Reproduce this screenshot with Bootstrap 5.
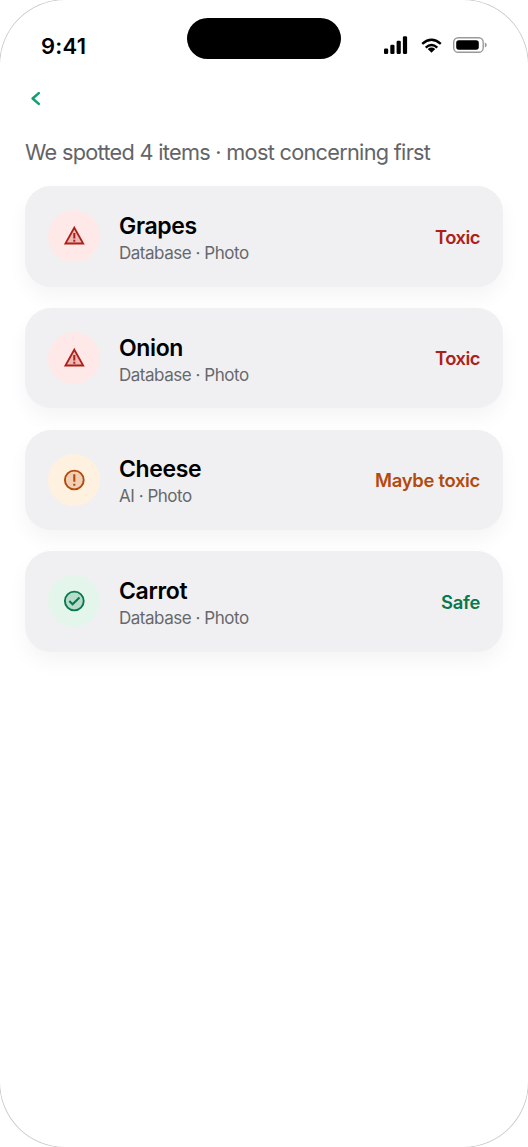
<!DOCTYPE html>
<html lang="en">
<head>
<meta charset="utf-8">
<meta name="viewport" content="width=device-width, initial-scale=1">
<title>Food scan results</title>
<link rel="stylesheet" href="https://cdn.jsdelivr.net/npm/bootstrap@5.3.0/dist/css/bootstrap.min.css">
<style>
body { font-family: Inter, "Liberation Sans", sans-serif; color: #000; background: #fff; }
.phone { width: 528px; height: 1147px; border-radius: 65px; box-shadow: 0 0 0 .7px #c4c4c4; background: #fff; }
.status-bar { height: 82px; padding: 18px 41px 0; }
.clock { width: 146px; font-size: 22px; font-weight: 600; line-height: 26px; padding-top: 15px; letter-spacing: .25px; }
.island { width: 154px; height: 41px; border-radius: 21px; background: #000; }
.indicators { width: 146px; padding-top: 18px; }
.back { height: 33px; padding-left: 29px; color: #0fa06b; }
.back svg { margin-top: 9px; }
.results { padding: 0 25px; }
.summary { margin: 14px 0 20px; padding-top: .2px; font-size: 21.7px; line-height: 28px; letter-spacing: -.7px; color: #636468; white-space: nowrap; }
.results-list { padding-top: .1px; gap: 21.4px; }
.food { height: 100.3px; padding: 0 23px 0 23px; border: 0; border-radius: 26px; background: #f0f0f2; box-shadow: 0 10px 20px rgba(0,0,0,.045); }
.disc { width: 52px; height: 52px; margin-right: 19px; }
.food-text { padding-top: 4px; }
.food-name { font-size: 23px; line-height: 29px; font-weight: 600; letter-spacing: -.35px; }
.food-source { font-size: 17px; line-height: 24px; letter-spacing: -.47px; color: #67686c; }
.verdict { padding-top: 2px; font-size: 18.4px; font-weight: 600; letter-spacing: -.3px; }
.is-toxic .disc { background: #ffe9e8; } .is-toxic .disc, .is-toxic .verdict { color: #ad2018; }
.is-toxic .verdict { letter-spacing: -.5px; }
.is-maybe .disc { background: #fff1df; } .is-maybe .disc, .is-maybe .verdict { color: #b24a0b; }
.is-safe .disc { background: #e4f6ec; } .is-safe .disc, .is-safe .verdict { color: #08784d; }
</style>
</head>
<body>
<main class="phone overflow-hidden">
  <header class="status-bar d-flex justify-content-between">
    <div class="clock">9:41</div>
    <div class="island"></div>
    <div class="indicators d-flex justify-content-end">
      <svg width="103" height="19" viewBox="0 0 103 19" aria-hidden="true">
        <rect x="0" y="12.5" width="4.2" height="5.5" rx="1.3"/><rect x="6.3" y="8.8" width="4.2" height="9.2" rx="1.3"/><rect x="12.6" y="4.7" width="4.2" height="13.3" rx="1.3"/><rect x="18.9" y=".3" width="4.2" height="17.7" rx="1.3"/>
        <g fill="none" stroke="#000" stroke-width="2.4"><path d="M38.2 7.8Q47.5-.2 56.8 7.8M41.7 11.6Q47.5 6.6 53.3 11.6"/></g>
        <path d="M43.7 12.9Q47.5 10.3 51.3 12.9L47.5 16.8Z"/>
        <rect x="69.7" y="1.7" width="29.5" height="14.6" rx="4.6" fill="none" stroke="#999" stroke-width="1.4"/>
        <rect x="72.2" y="4.3" width="22.6" height="9.4" rx="2.6"/><path d="M100.8 6.5Q102.8 7.2 102.8 9T100.8 11.5Z" fill="#999"/>
      </svg>
    </div>
  </header>
  <nav class="back" aria-label="Back">
    <svg class="d-block" width="13" height="15" viewBox="0 0 13 15" fill="none" stroke="currentColor" stroke-width="2.5" stroke-linecap="round" stroke-linejoin="round"><path d="M9.8 2.1 3.6 7.5 9.8 12.9"/></svg>
  </nav>
  <section class="results">
    <p class="summary">We spotted 4 items · most concerning first</p>
    <div class="results-list d-flex flex-column">
      <article class="card food flex-row align-items-center is-toxic">
        <div class="disc rounded-circle d-flex align-items-center justify-content-center"><svg width="24" height="24" viewBox="0 0 24 24"><path d="M12.3 3.7 21.2 19.5H3.4Z" fill="currentColor" fill-opacity=".24" stroke="currentColor" stroke-width="1.8"/><path d="M12.3 9V14.5M12.3 15.7V17.7" stroke="currentColor" stroke-width="2"/></svg></div>
        <div class="food-text flex-grow-1"><div class="food-name">Grapes</div><div class="food-source">Database · Photo</div></div><div class="verdict">Toxic</div>
      </article>
      <article class="card food flex-row align-items-center is-toxic">
        <div class="disc rounded-circle d-flex align-items-center justify-content-center"><svg width="24" height="24" viewBox="0 0 24 24"><path d="M12.3 3.7 21.2 19.5H3.4Z" fill="currentColor" fill-opacity=".24" stroke="currentColor" stroke-width="1.8"/><path d="M12.3 9V14.5M12.3 15.7V17.7" stroke="currentColor" stroke-width="2"/></svg></div>
        <div class="food-text flex-grow-1"><div class="food-name">Onion</div><div class="food-source">Database · Photo</div></div><div class="verdict">Toxic</div>
      </article>
      <article class="card food flex-row align-items-center is-maybe">
        <div class="disc rounded-circle d-flex align-items-center justify-content-center"><svg width="24" height="24" viewBox="0 0 24 24"><circle cx="12.3" cy="12" r="9.4" fill="currentColor" fill-opacity=".2" stroke="currentColor" stroke-width="1.9"/><path d="M12.3 6.3V13.7M12.3 15.7V17.8" stroke="currentColor" stroke-width="2.1"/></svg></div>
        <div class="food-text flex-grow-1"><div class="food-name">Cheese</div><div class="food-source">AI · Photo</div></div><div class="verdict">Maybe toxic</div>
      </article>
      <article class="card food flex-row align-items-center is-safe">
        <div class="disc rounded-circle d-flex align-items-center justify-content-center"><svg width="24" height="24" viewBox="0 0 24 24"><circle cx="12.3" cy="12" r="9.4" fill="currentColor" fill-opacity=".2" stroke="currentColor" stroke-width="1.9"/><path d="M7.3 12 10.6 15.2 17.5 8.4" fill="none" stroke="currentColor" stroke-width="2.1"/></svg></div>
        <div class="food-text flex-grow-1"><div class="food-name">Carrot</div><div class="food-source">Database · Photo</div></div><div class="verdict">Safe</div>
      </article>
    </div>
  </section>
</main>
<script src="https://cdn.jsdelivr.net/npm/bootstrap@5.3.0/dist/js/bootstrap.bundle.min.js"></script>
</body>
</html>
